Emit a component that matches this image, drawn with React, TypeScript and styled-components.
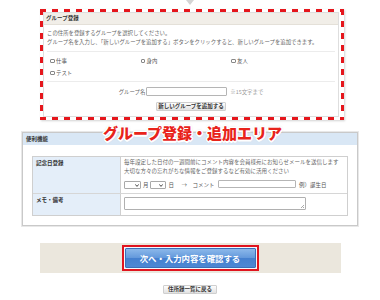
import React from 'react';
import styled, { createGlobalStyle } from 'styled-components';

const GlobalStyle = createGlobalStyle`
  html, body {
    margin: 0;
    padding: 0;
    background: #fff;
  }
  body {
    font-family: "Noto Sans CJK JP", "Noto Sans", sans-serif;
    color: #555;
  }
  * {
    box-sizing: border-box;
  }
`;

const Page = styled.div`
  width: 380px;
  height: 300px;
  overflow: hidden;
  background: #fff;
`;

const TopMark = styled.div`
  height: 9px;
  display: flex;
  justify-content: center;
`;

// red dashed annotation frame around the group panel
const Frame = styled.div`
  position: relative;
  margin-left: 40px;
  width: 304px;
  height: 111px;
  padding: 3px 5px 3px 3px;
  box-shadow: 1px 1px 2px rgba(0, 0, 0, 0.18);

  &::after {
    content: '';
    position: absolute;
    inset: 0;
    pointer-events: none;
    background:
      repeating-linear-gradient(90deg, #e5161c 0 6px, transparent 6px 12px) top left / 100% 3px no-repeat,
      repeating-linear-gradient(90deg, #e5161c 0 6px, transparent 6px 12px) bottom left / 100% 3px no-repeat,
      repeating-linear-gradient(180deg, #e5161c 0 6px, transparent 6px 12px) top left / 3px 100% no-repeat,
      repeating-linear-gradient(180deg, #e5161c 0 6px, transparent 6px 12px) top right / 3px 100% no-repeat;
  }
`;

const GroupPanel = styled.div`
  height: 100%;
  border: 1px solid #dedede;
  background: #fff;
`;

const GroupHeader = styled.div`
  height: 12px;
  padding-left: 2px;
  background: #f1eee8;
  border-bottom: 1px solid #e4e0d8;
  font-size: 5.5px;
  line-height: 11px;
  font-weight: 700;
  color: #333;
`;

const GroupBody = styled.div`
  padding: 0 3px;
`;

const Description = styled.p`
  margin: 0;
  padding: 4px 0 5px;
  font-size: 5.4px;
  line-height: 8.5px;
  color: #666;
  border-bottom: 1px solid #ececec;
`;

const CheckGrid = styled.div`
  display: grid;
  grid-template-columns: repeat(3, 90.5px);
  grid-auto-rows: 12px;
  padding: 3px 0 2px 3px;
  border-bottom: 1px solid #ececec;
`;

const CheckItem = styled.label`
  display: flex;
  align-items: center;
  gap: 1.5px;
  font-size: 5.4px;
  color: #555;
`;

const CheckBox = styled.span`
  width: 4.5px;
  height: 4.5px;
  border: 1px solid #888;
  border-radius: 1px;
  background: #fff;
`;

const NameRow = styled.div`
  display: flex;
  justify-content: center;
  align-items: center;
  height: 9px;
  margin-top: 5px;
  font-size: 5.4px;
  color: #666;
`;

const TextInput = styled.input<{ $w: number; $h: number }>`
  width: ${({ $w }) => $w}px;
  height: ${({ $h }) => $h}px;
  margin: 0 0 0 ${({ $h }) => ($h > 8 ? 1 : 0)}px;
  padding: 0;
  border: 1px solid #b5b5b5;
  border-radius: 1px;
  background: #fff;
  outline: none;
`;

const Note = styled.span`
  margin-left: 3px;
  color: #999;
`;

const SmallButton = styled.button<{ $w: number }>`
  display: block;
  width: ${({ $w }) => $w}px;
  height: 9px;
  padding: 0;
  border: 1px solid #cfcfcf;
  border-radius: 1px;
  background: linear-gradient(#fdfdfd, #e2e2e2);
  font-family: inherit;
  font-size: 5.5px;
  line-height: 7px;
  font-weight: 700;
  color: #333;
`;

const AddButtonWrap = styled.div`
  display: flex;
  justify-content: center;
  margin-top: 6px;
`;

const ToolSection = styled.section`
  position: relative;
  margin: 12px 0 0 22px;
  width: 336px;
`;

const Caption = styled.div`
  position: absolute;
  left: 81px;
  top: -7px;
  z-index: 1;
  white-space: nowrap;
  font-size: 15px;
  line-height: 15px;
  font-weight: 900;
  color: #e8231b;
  text-shadow:
    1.5px 0 #fff, -1.5px 0 #fff, 0 1.5px #fff, 0 -1.5px #fff,
    1px 1px #fff, -1px -1px #fff, 1px -1px #fff, -1px 1px #fff,
    0 0 3px rgba(0, 0, 0, 0.25);
`;

const ToolPanel = styled.div`
  height: 94px;
  border: 1px solid #c9c9c9;
  box-shadow: 0 0 0 1px #e8e8e8;
  background: #fff;
`;

const ToolHeader = styled.div`
  height: 12px;
  padding-left: 3px;
  background: #d9e7f5;
  font-size: 5.5px;
  line-height: 12px;
  font-weight: 700;
  color: #333;
`;

const ToolBody = styled.div`
  padding: 11px 9px 0 9px;
`;

const Table = styled.div`
  border: 1px solid #cfcfcf;
`;

const TableRow = styled.div<{ $h: number; $last?: boolean }>`
  display: grid;
  grid-template-columns: 88px 1fr;
  height: ${({ $h }) => $h}px;
  border-bottom: ${({ $last }) => ($last ? 'none' : '1px solid #d6d6d6')};
`;

const HeadCell = styled.div`
  padding: 2px 4px 0 3px;
  background: #e4eef9;
  border-right: 1px solid #cfcfcf;
  font-size: 5.5px;
  line-height: 8.5px;
  font-weight: 700;
  color: #333;
`;

const ValueCell = styled.div<{ $pt: number }>`
  padding: ${({ $pt }) => $pt}px 3px 0 3px;
  font-size: 5.5px;
  line-height: 8.5px;
  color: #666;
`;

const Controls = styled.div`
  display: flex;
  align-items: center;
  height: 8px;
  margin-top: 6px;
  color: #555;
`;

const SelectBox = styled.span<{ $w: number }>`
  display: flex;
  justify-content: flex-end;
  align-items: center;
  width: ${({ $w }) => $w}px;
  height: 8px;
  padding-right: 1.5px;
  border: 1px solid #a9a9a9;
  border-radius: 1px;
  background: #fff;
`;

const Word = styled.span<{ $ml: number }>`
  margin-left: ${({ $ml }) => $ml}px;
  margin-right: 0;
`;

const Memo = styled.textarea`
  display: block;
  width: 182px;
  height: 13px;
  margin: 0;
  padding: 0;
  border: 1px solid #b0b0b0;
  border-radius: 1px;
  resize: none;
  outline: none;
  background:
    linear-gradient(135deg, transparent 55%, #aaa 55%, #aaa 65%, transparent 65%, transparent 78%, #aaa 78%) right 1px bottom 1px / 4px 4px no-repeat,
    #fff;
`;

const Band = styled.div`
  display: flex;
  justify-content: center;
  align-items: center;
  margin: 17px 0 0 40px;
  width: 301px;
  height: 30px;
  padding-right: 1px;
  background: #ebe7dd;
`;

const ConfirmFrame = styled.div`
  width: 137px;
  height: 26px;
  padding: 1px;
  border: 2px solid #e0141e;
  background: #f4f8fd;
`;

const ConfirmButton = styled.button`
  display: block;
  width: 100%;
  height: 100%;
  padding: 0;
  border: 1px solid #3a6fb8;
  border-radius: 1px;
  background: linear-gradient(#8bb8ea, #6499dc 48%, #4580cf 52%, #4d88d4);
  font-family: inherit;
  font-size: 8.4px;
  line-height: 16px;
  font-weight: 700;
  color: #fff;
`;

const BackWrap = styled.div`
  display: flex;
  justify-content: center;
  margin-top: 12px;
`;

const Chevron = () => (
  <svg width="4" height="3" viewBox="0 0 4 3">
    <path d="M0.3 0.4 L2 2.4 L3.7 0.4" fill="none" stroke="#333" strokeWidth="0.9" />
  </svg>
);

const groups = ['仕事', '身内', '友人', 'テスト'];

const App = () => {
  return (
    <Page>
      <GlobalStyle />
      <TopMark>
        <svg width="8" height="5" viewBox="0 0 8 5">
          <polygon points="0,0 8,0 4,5" fill="#d4d4d4" />
        </svg>
      </TopMark>

      <Frame>
        <GroupPanel>
          <GroupHeader>グループ登録</GroupHeader>
          <GroupBody>
            <Description>
              この住所を登録するグループを選択してください。
              <br />
              グループ名を入力し、「新しいグループを追加する」ボタンをクリックすると、新しいグループを追加できます。
            </Description>
            <CheckGrid>
              {groups.map((g) => (
                <CheckItem key={g}>
                  <CheckBox />
                  {g}
                </CheckItem>
              ))}
            </CheckGrid>
            <NameRow>
              グループ名
              <TextInput $w={81} $h={9} />
              <Note>※15文字まで</Note>
            </NameRow>
            <AddButtonWrap>
              <SmallButton $w={70}>新しいグループを追加する</SmallButton>
            </AddButtonWrap>
          </GroupBody>
        </GroupPanel>
      </Frame>

      <ToolSection>
        <Caption>グループ登録・追加エリア</Caption>
        <ToolPanel>
          <ToolHeader>便利機能</ToolHeader>
          <ToolBody>
            <Table>
              <TableRow $h={37}>
                <HeadCell>記念日登録</HeadCell>
                <ValueCell $pt={1}>
                  毎年設定した日付の一週間前にコメント内容を会員様宛にお知らせメールを送信します
                  <br />
                  大切な方々の忘れがちな情報をご登録するなど有効に活用ください
                  <Controls>
                    <SelectBox $w={17}>
                      <Chevron />
                    </SelectBox>
                    <Word $ml={2}>月</Word>
                    <Word $ml={1}>
                      <SelectBox $w={16}>
                        <Chevron />
                      </SelectBox>
                    </Word>
                    <Word $ml={3}>日</Word>
                    <Word $ml={7.5}>→</Word>
                    <Word $ml={5.5}>コメント</Word>
                    <Word $ml={3.4}>
                      <TextInput $w={78} $h={8} />
                    </Word>
                    <Word $ml={3}>例）誕生日</Word>
                  </Controls>
                </ValueCell>
              </TableRow>
              <TableRow $h={21} $last>
                <HeadCell>メモ・備考</HeadCell>
                <ValueCell $pt={3}>
                  <Memo />
                </ValueCell>
              </TableRow>
            </Table>
          </ToolBody>
        </ToolPanel>
      </ToolSection>

      <Band>
        <ConfirmFrame>
          <ConfirmButton>次へ・入力内容を確認する</ConfirmButton>
        </ConfirmFrame>
      </Band>

      <BackWrap>
        <SmallButton $w={54}>住所録一覧に戻る</SmallButton>
      </BackWrap>
    </Page>
  );
};

export default App;
